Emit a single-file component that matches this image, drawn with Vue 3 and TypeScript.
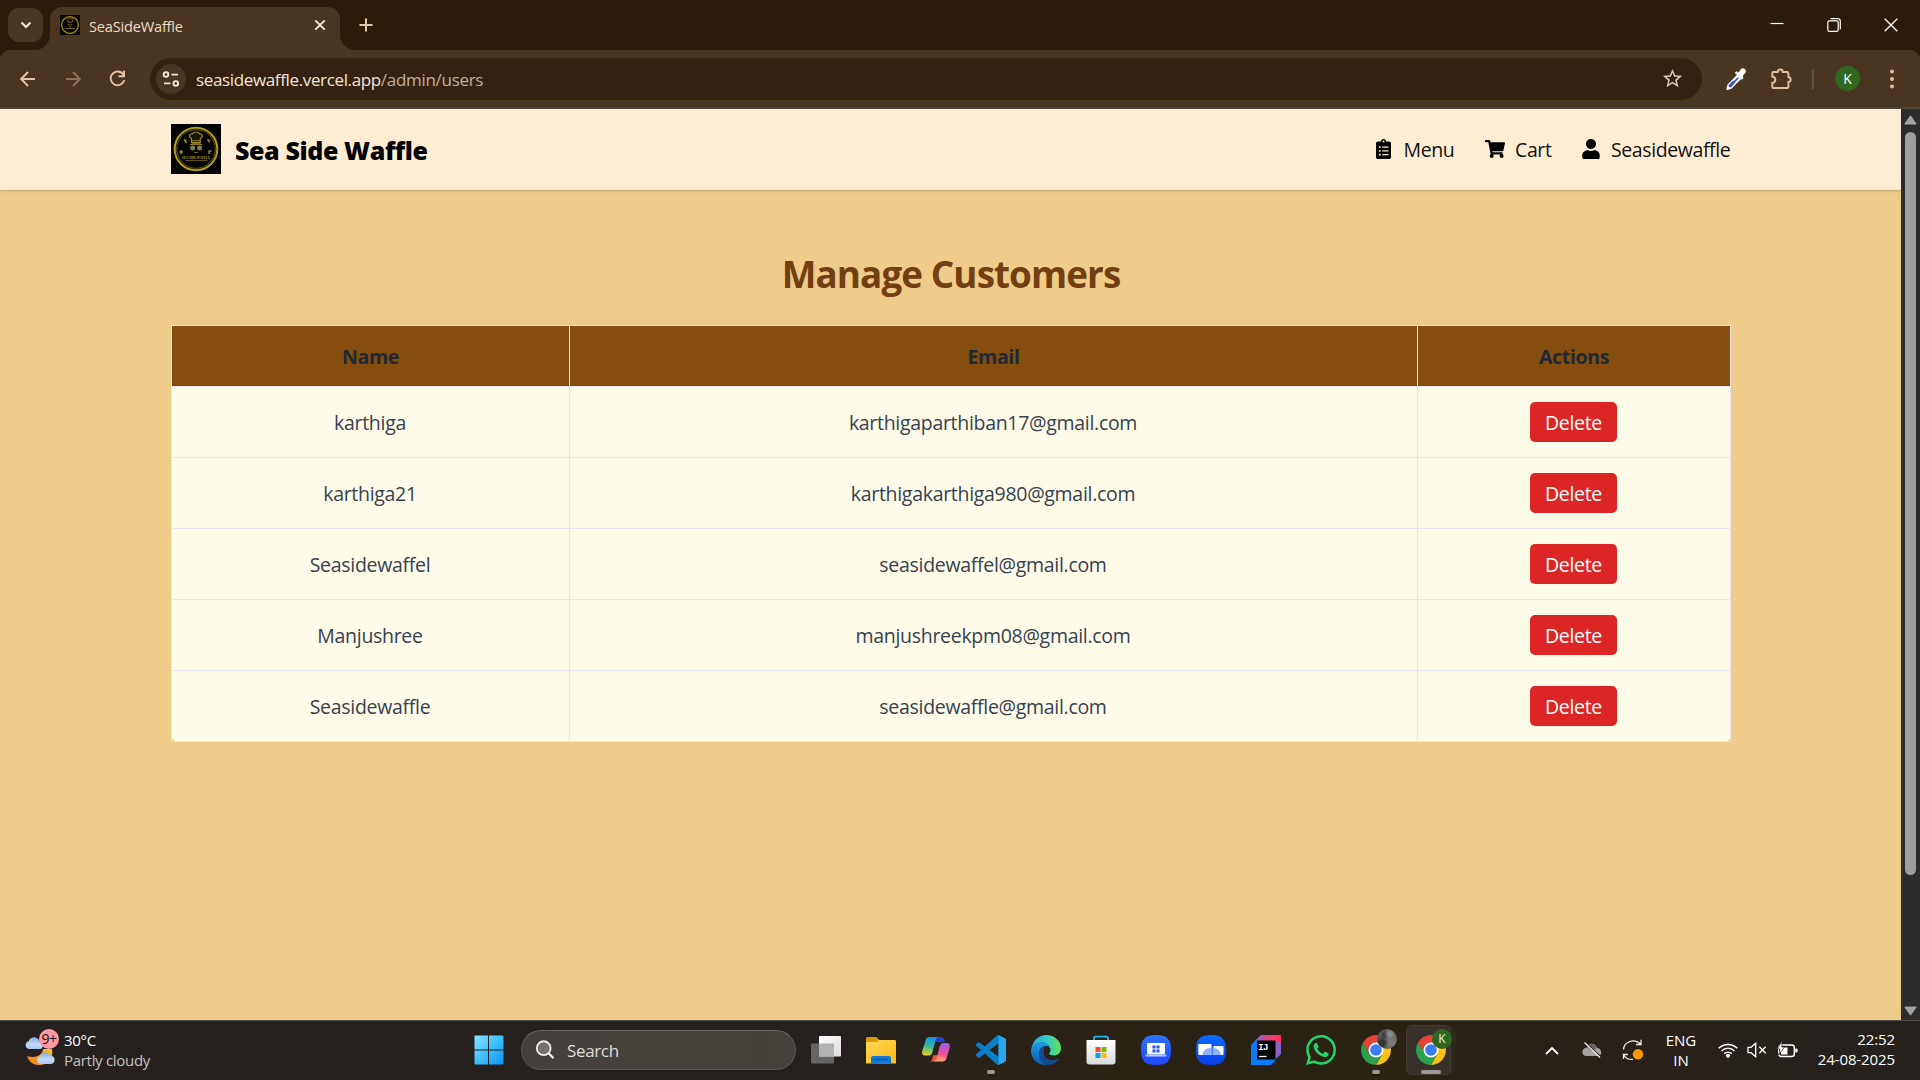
<script setup lang="ts">
interface Customer {
  name: string
  email: string
}

const customers: Customer[] = [
  { name: 'karthiga', email: 'karthigaparthiban17@gmail.com' },
  { name: 'karthiga21', email: 'karthigakarthiga980@gmail.com' },
  { name: 'Seasidewaffel', email: 'seasidewaffel@gmail.com' },
  { name: 'Manjushree', email: 'manjushreekpm08@gmail.com' },
  { name: 'Seasidewaffle', email: 'seasidewaffle@gmail.com' },
]
</script>

<template>
  <div class="desktop">
    <header class="tabstrip">
      <button class="tab-search" aria-label="Search tabs">
        <svg width="12" height="8" viewBox="0 0 12 8"><path d="M1.500 1.500 6 6l4.500-4.500" fill="none" stroke="#f3e3d3" stroke-width="2.200" /></svg>
      </button>
      <div class="tab">
        <svg class="favicon" width="20" height="20" viewBox="0 0 50 50">
          <rect width="50" height="50" fill="#050500" />
          <circle cx="25" cy="25" r="21" fill="none" stroke="#a08b18" stroke-width="3.400" />
          <path d="M20 18v-4c-4-4 1-8 3-5 2-3 6-2 6 0 5-1 5 4 2 5v4zM20 24h4m3 0h4M22 29h6M13 34h24" fill="none" stroke="#8b7a1e" stroke-width="2.200" />
        </svg>
        <span class="tab-title">SeaSideWaffle</span>
        <svg class="tab-close" width="12" height="12" viewBox="0 0 12 12"><path d="m1.300 1.300 9.400 9.400m0-9.400-9.400 9.400" stroke="#f7e7d9" stroke-width="1.900" /></svg>
      </div>
      <svg class="new-tab" width="14" height="14" viewBox="0 0 14 14"><path d="M7 .5v13M.5 7h13" stroke="#e9c6a6" stroke-width="2" /></svg>
      <div class="window-controls">
        <svg width="14" height="14" viewBox="0 0 14 14"><path d="M.5 5.500h13" stroke="#fff" stroke-width="1.200" /></svg>
        <svg width="14" height="14" viewBox="0 0 14 14" fill="none" stroke="#fff" stroke-width="1.200"><rect x=".8" y="2.800" width="10.400" height="10.500" rx="1.600" /><path d="M3.400.7h7.200a2.700 2.700 0 0 1 2.700 2.700v7.800" /></svg>
        <svg width="14" height="14" viewBox="0 0 14 14"><path d="m.7.7 12.600 12.600m0-12.600L.7 13.300" stroke="#fff" stroke-width="1.300" /></svg>
      </div>
    </header>

    <div class="toolbar">
      <svg class="nav-back" width="16" height="16" viewBox="0 0 16 16"><path d="M15 8H1.500M8 1 1.200 8 8 15" fill="none" stroke="#e7c3a3" stroke-width="1.900" /></svg>
      <svg class="nav-forward" width="16" height="16" viewBox="0 0 16 16"><path d="M1 8h13.500M8 1l6.800 7L8 15" fill="none" stroke="#8d7259" stroke-width="1.900" /></svg>
      <svg class="nav-reload" width="17" height="17" viewBox="0 0 17 17"><path d="M14.300 4.500A6.900 6.900 0 1 0 15.300 10M15 .8v5.500H9.500" fill="none" stroke="#e7c3a3" stroke-width="1.900" /></svg>
      <div class="omnibox">
        <span class="site-info">
          <svg width="18" height="16" viewBox="0 0 18 16" fill="none" stroke="#f6e3d2" stroke-width="1.900"><circle cx="4" cy="3.600" r="2.300" /><path d="M9.500 3.600h6.500M2 12.400h6.500" /><circle cx="13.800" cy="12.400" r="2.300" /></svg>
        </span>
        <span class="url"><span class="host">seasidewaffle.vercel.app</span><span class="path">/admin/users</span></span>
        <svg class="star" width="23" height="23" viewBox="0 0 24 24"><path fill="#dcc9b8" d="M22 9.240l-7.190-.62L12 2 9.190 8.630 2 9.240l5.460 4.730L5.820 21 12 17.270 18.180 21l-1.630-7.030L22 9.240zM12 15.400l-3.760 2.270 1-4.280-3.320-2.880 4.380-.38L12 6.100l1.710 4.040 4.380.38-3.320 2.880 1 4.280L12 15.400z" /></svg>
      </div>
      <svg class="eyedropper" width="22" height="24" viewBox="0 0 22 24">
        <path d="M12.800 8.500 3.300 18.200 2.300 22l3.700-1.200 9.300-9.600z" fill="#2f4fc8" stroke="#fff" stroke-width="2" stroke-linejoin="round" />
        <path d="m9.200 14.500-4.700 5" stroke="#2f4fc8" stroke-width="3" />
        <path d="m9.700 5.800 2-1.600 1.800 1.200 2.700-3.700c2-1.600 5.800 1.200 4.500 3.800l-3 3.500.8 2-1.700 1.700z" fill="#fff" />
      </svg>
      <svg class="extensions" width="22" height="22" viewBox="0 0 22 22"><path d="M3.600 4H7.700C8 .8 12.500.8 12.800 4h4.300q1.300 0 1.300 1.300V9c3 .4 3 4.700 0 5v4.700q0 1.300-1.300 1.300H3.600q-1.300 0-1.300-1.300V14.900c4-.5 4-5.800 0-6.300V5.300Q2.300 4 3.600 4Z" fill="none" stroke="#e3bd9c" stroke-width="2" /></svg>
      <span class="separator"></span>
      <span class="profile">K</span>
      <svg class="more" width="6" height="22" viewBox="0 0 6 22" fill="#e3bd9c"><circle cx="3" cy="3.500" r="2" /><circle cx="3" cy="11" r="2" /><circle cx="3" cy="18.500" r="2" /></svg>
    </div>

    <div class="viewport">
      <div class="page">
        <nav class="navbar">
          <div class="brand">
            <svg class="logo" width="50" height="50" viewBox="0 0 50 50">
              <rect width="50" height="50" fill="#030303" />
              <circle cx="25" cy="25" r="21.300" fill="none" stroke="#b39c18" stroke-width="2" />
              <circle cx="25" cy="25" r="19.300" fill="none" stroke="#7a6c14" stroke-width=".8" />
              <path d="M20.500 18.500v-4.200c-3.500-1-2-5 .8-4.300 1-2.600 6.400-2.600 7.200 0 3-.6 4 3.400.8 4.300v4.200z" fill="#151303" stroke="#a18d1e" stroke-width="1.100" />
              <path d="M20.500 16.700h9M20.500 19.300h9" stroke="#a18d1e" stroke-width=".9" />
              <circle cx="21.600" cy="24" r="2.500" fill="#817a55" /><circle cx="28.600" cy="24" r="2.500" fill="#817a55" />
              <path d="M19 20.500h12M23 28q2 1.400 4 0" stroke="#8d7c1c" stroke-width="1" fill="none" />
              <path d="m13 15.500 2.500 3.500m.3-3-2.500 1M10 26v4m-1.500-2H12" stroke="#a18d1e" stroke-width="1.300" />
              <path d="m36.500 15 2 3.800m.5-3-2.500 1M37.500 29l3-2.500M38 26v4" stroke="#8f804b" stroke-width="1.300" />
              <text x="25" y="34.600" text-anchor="middle" class="logo-text" textLength="28" lengthAdjust="spacingAndGlyphs">SEA SIDE WAFFLE</text>
              <path d="M14.500 36.500h22" stroke="#766818" stroke-width=".8" />
            </svg>
            <span class="brand-name">Sea Side Waffle</span>
          </div>
          <ul class="links">
            <li>
              <span class="link-icon"><svg width="15" height="20" viewBox="0 0 384 512"><path d="M336 64h-80c0-35.300-28.700-64-64-64s-64 28.700-64 64H48C21.500 64 0 85.500 0 112v352c0 26.500 21.500 48 48 48h288c26.500 0 48-21.500 48-48V112c0-26.500-21.500-48-48-48zM96 424c-13.300 0-24-10.700-24-24s10.700-24 24-24 24 10.700 24 24-10.700 24-24 24zm0-96c-13.300 0-24-10.700-24-24s10.700-24 24-24 24 10.700 24 24-10.700 24-24 24zm0-96c-13.300 0-24-10.700-24-24s10.700-24 24-24 24 10.700 24 24-10.700 24-24 24zm96-192c13.300 0 24 10.700 24 24s-10.700 24-24 24-24-10.700-24-24 10.700-24 24-24zm128 368c0 4.400-3.600 8-8 8H168c-4.400 0-8-3.600-8-8v-16c0-4.400 3.600-8 8-8h144c4.400 0 8 3.600 8 8v16zm0-96c0 4.400-3.600 8-8 8H168c-4.400 0-8-3.600-8-8v-16c0-4.400 3.600-8 8-8h144c4.400 0 8 3.600 8 8v16zm0-96c0 4.400-3.600 8-8 8H168c-4.400 0-8-3.600-8-8v-16c0-4.400 3.600-8 8-8h144c4.400 0 8 3.600 8 8v16z" /></svg></span>Menu
            </li>
            <li>
              <span class="link-icon cart"><svg width="20" height="18" viewBox="0 0 576 512"><path d="M528.120 301.319l47.273-208C578.806 78.301 567.391 64 551.990 64H159.208l-9.166-44.810C147.758 8.021 137.930 0 126.529 0H24C10.745 0 0 10.745 0 24v16c0 13.255 10.745 24 24 24h69.883l70.248 343.435C147.325 417.100 136 435.222 136 456c0 30.928 25.072 56 56 56s56-25.072 56-56c0-15.674-6.447-29.835-16.824-40h209.647C430.447 426.165 424 440.326 424 456c0 30.928 25.072 56 56 56s56-25.072 56-56c0-22.172-12.888-41.332-31.579-50.405l5.517-24.276c3.413-15.018-8.002-29.319-23.403-29.319H218.117l-6.545-32h293.145c11.206 0 20.920-7.754 23.403-18.681z" /></svg></span>Cart
            </li>
            <li>
              <span class="link-icon user"><svg width="18" height="20" viewBox="0 0 448 512"><path d="M224 256c70.700 0 128-57.300 128-128S294.700 0 224 0 96 57.300 96 128s57.300 128 128 128zm89.600 32h-16.700c-22.200 10.200-46.900 16-72.900 16s-50.600-5.800-72.900-16h-16.700C60.200 288 0 348.200 0 422.400V464c0 26.500 21.500 48 48 48h352c26.500 0 48-21.500 48-48v-41.600c0-74.200-60.200-134.400-134.400-134.400z" /></svg></span>Seasidewaffle
            </li>
          </ul>
        </nav>

        <main class="content">
          <h1>Manage Customers</h1>
          <div class="table-wrap">
            <table>
              <colgroup><col class="col-name" /><col class="col-email" /><col class="col-actions" /></colgroup>
              <thead>
                <tr><th>Name</th><th>Email</th><th>Actions</th></tr>
              </thead>
              <tbody>
                <tr v-for="customer in customers" :key="customer.email">
                  <td>{{ customer.name }}</td>
                  <td>{{ customer.email }}</td>
                  <td><button class="delete">Delete</button></td>
                </tr>
              </tbody>
            </table>
          </div>
        </main>
      </div>
      <div class="scrollbar">
        <svg width="13" height="10" viewBox="0 0 13 10"><path d="M6.500.8 12.200 9H.8z" fill="#a3a3a3" stroke="#a3a3a3" stroke-linejoin="round" /></svg>
        <span class="thumb"></span>
        <svg width="13" height="10" viewBox="0 0 13 10"><path d="M6.500 9.200 12.200 1H.8z" fill="#a3a3a3" stroke="#a3a3a3" stroke-linejoin="round" /></svg>
      </div>
    </div>

    <footer class="taskbar">
      <div class="weather">
        <span class="weather-icon">
          <svg width="34" height="38" viewBox="0 0 34 38">
            <defs>
              <linearGradient id="moon" x1="1" y1="0" x2="0" y2="1"><stop offset="0" stop-color="#f9c21f" /><stop offset="1" stop-color="#f07c1e" /></linearGradient>
              <linearGradient id="cloud" x1="0" y1="0" x2="0" y2="1"><stop offset="0" stop-color="#7ea8e8" /><stop offset=".6" stop-color="#c4daf7" /><stop offset="1" stop-color="#a9c6f1" /></linearGradient>
            </defs>
            <path d="M27 18c2 10-5 16-13 16-6 0-10-3-12-9 8 3 16-1 16-7z" fill="url(#moon)" />
            <path d="M4 18a4 4 0 0 1-.3-7.800C5 5.500 12 4.500 14.500 10 19 10.500 19 18 15 18z" fill="url(#cloud)" />
            <path d="M15.500 33a4 4 0 0 1-.3-7.800c1.300-5 8-5.500 10.300-.7 5.500.5 5.500 8.500 0 8.500z" fill="url(#cloud)" />
          </svg>
          <span class="count">9+</span>
        </span>
        <span class="weather-text"><b>30°C</b><span>Partly cloudy</span></span>
      </div>

      <div class="apps">
        <svg class="start" width="30" height="30" viewBox="0 0 30 30">
          <defs><linearGradient id="win" x1="0" y1="0" x2="1" y2="1"><stop offset="0" stop-color="#8ae2fe" /><stop offset=".5" stop-color="#3fc0fc" /><stop offset="1" stop-color="#0a94f8" /></linearGradient></defs>
          <path d="M1.500.5H14v14H.5v-13a1 1 0 0 1 1-1zM15 .5h13.500a1 1 0 0 1 1 1v13H15zM.5 15.500H14v14H1.500a1 1 0 0 1-1-1zM15 15.500h14.500v13a1 1 0 0 1-1 1H15z" fill="url(#win)" />
        </svg>
        <div class="search">
          <svg width="20" height="20" viewBox="0 0 20 20"><circle cx="8.700" cy="8.200" r="6.900" fill="#74716d" stroke="#e8eef2" stroke-width="1.900" /><path d="m13.700 13.300 4.800 4.900" stroke="#e8eef2" stroke-width="2.200" /></svg>
          <span>Search</span>
        </div>

        <span class="app">
          <svg width="30" height="30" viewBox="0 0 30 30">
            <defs><linearGradient id="tvA" x1="0" y1="0" x2="1" y2="1"><stop offset="0" stop-color="#fff" /><stop offset="1" stop-color="#dcdcdc" /></linearGradient></defs>
            <rect y="8.500" width="23" height="20" rx="1" fill="#656565" /><rect x="8" y="1" width="22" height="20.500" rx="1" fill="url(#tvA)" /><path d="M8 8.500h15v13H8z" fill="#b3b3b3" />
          </svg>
        </span>
        <span class="app">
          <svg width="30" height="30" viewBox="0 0 30 30">
            <defs><linearGradient id="folder" x1="0" y1="0" x2="1" y2="1"><stop offset="0" stop-color="#ffd85a" /><stop offset="1" stop-color="#fdb913" /></linearGradient></defs>
            <path d="M0 3.500Q0 2 1.500 2h8q1 0 1.700.8L13.500 5H28q2 0 2 2v5H0z" fill="#dd9a05" />
            <path d="M0 7h11l2-2h15.500Q30 5 30 6.500v22H0z" fill="url(#folder)" />
            <path d="M5 28.500V23q0-2 2-2h16q2 0 2 2v5.500z" fill="#0f78d4" /><path d="M8 24.500h14" stroke="#094f94" stroke-width="1.300" />
          </svg>
        </span>
        <span class="app">
          <svg width="30" height="30" viewBox="0 0 30 30">
            <defs>
              <linearGradient id="copA" x1=".5" y1="0" x2=".3" y2="1"><stop offset="0" stop-color="#1595e8" /><stop offset=".5" stop-color="#35b7a0" /><stop offset="1" stop-color="#f1d312" /></linearGradient>
              <linearGradient id="copB" x1=".6" y1="0" x2=".4" y2="1"><stop offset="0" stop-color="#a157ec" /><stop offset=".6" stop-color="#ee5290" /><stop offset="1" stop-color="#ffb070" /></linearGradient>
            </defs>
            <path d="M13 2h7.500q2 0 2.600 2l.9 3.200h-6.500L14 6z" fill="#2145c9" />
            <path d="M8.500 26.500q2 0 2.700-2.300l1-4h5l-1.200 6z" fill="#f0573c" />
            <path d="M8.700 2H18c-2.500 0-3 1.500-3.500 3.500l-3 11.500c-.7 2.500-2 3.500-4 3.500H4C1.500 20.500.7 18.500 1.300 16L4.500 5.500C5.200 3.200 6.200 2 8.700 2z" fill="url(#copA)" />
            <path d="M21.500 26.500h-9.800c2.500 0 3.500-1.500 4-3.500l3-11.500c.7-2.500 2-3.500 4-3.500H26c2.500 0 3.300 2 2.700 4.500L25.700 23c-.7 2.300-1.700 3.500-4.200 3.500z" fill="url(#copB)" />
          </svg>
        </span>
        <span class="app running">
          <svg width="30" height="30" viewBox="0 0 24 24">
            <path fill="#0a7fc8" d="M23.150 2.587L18.210.21a1.494 1.494 0 0 0-1.705.29l-9.460 8.630-4.120-3.128a.999.999 0 0 0-1.276.057L.327 7.261A1 1 0 0 0 .326 8.740L3.899 12 .326 15.260a1 1 0 0 0 .001 1.479L1.650 17.940a.999.999 0 0 0 1.276.057l4.120-3.128 9.460 8.630a1.492 1.492 0 0 0 1.704.29l4.942-2.377A1.500 1.500 0 0 0 24 20.060V3.939a1.500 1.500 0 0 0-.85-1.352zm-5.146 14.861L10.826 12l7.178-5.448v10.896z" />
            <path fill="#2ba5ee" d="M18.004.1 23.150 2.587A1.500 1.500 0 0 1 24 3.939V20.060a1.500 1.500 0 0 1-.85 1.352l-5.146 2.480z" />
          </svg>
        </span>
        <span class="app">
          <svg width="30" height="30" viewBox="0 0 30 30">
            <defs>
              <linearGradient id="edgeA"><stop offset="0" stop-color="#2aa9e0" /><stop offset=".5" stop-color="#35c7c9" /><stop offset="1" stop-color="#63e251" /></linearGradient>
              <linearGradient id="edgeB" x1="0" y1="0" x2="0" y2="1"><stop offset="0" stop-color="#1b9de2" /><stop offset="1" stop-color="#0a5bb5" /></linearGradient>
            </defs>
            <path d="M.5 14C1.500 5.500 8 0 15.200 0 23.500 0 30 6 30 13.200c0 4.600-3.400 7.300-7.200 7.300-3.400 0-5-1.400-4.600-2.300.8-1 1.300-2 1.300-3.300C19.500 10.500 15 7.500 10.800 7.500 5.500 7.500 1.800 10 .5 14z" fill="url(#edgeA)" />
            <path d="M.1 15C.5 10 5.500 7 10.500 7c5 0 9.200 3.500 9 7.900-.2-2-2-3.800-4.800-3.800-4 0-6.500 3.500-6.500 7.800 0 5 3.500 9.800 9 10.800-1 .3-1.600.3-2.300.3C6 30-.4 23 .1 15z" fill="url(#edgeB)" />
            <path d="M14 11.200c-4 1.300-6 4.300-6 8.300 0 5.500 4.500 10.300 10 10.300 4 0 7.700-2.300 10-5.300.4-.6 0-1.200-.8-.8-2 1-4 1.300-5.800 1.300-4.800 0-8.700-3-8.700-7 0-3 .5-5 1.300-6.800z" fill="#124c8f" />
          </svg>
        </span>
        <span class="app">
          <svg width="30" height="30" viewBox="0 0 30 30">
            <defs><linearGradient id="bag" x1="0" y1="0" x2="0" y2="1"><stop offset="0" stop-color="#fff" /><stop offset="1" stop-color="#d9dadb" /></linearGradient></defs>
            <path d="M8 6V3q0-1.300 1.300-1.300h11.400Q22 1.700 22 3v3" fill="none" stroke="#26b4ea" stroke-width="1.800" />
            <path d="M.5 5h29v21.500q0 3-3 3h-23q-3 0-3-3z" fill="url(#bag)" />
            <path d="M9.500 12h5v5h-5z" fill="#f25022" /><path d="M15.500 12h5v5h-5z" fill="#7fba00" /><path d="M9.500 18h5v5h-5z" fill="#00a4ef" /><path d="M15.500 18h5v5h-5z" fill="#ffb900" />
          </svg>
        </span>
        <span class="app">
          <svg width="30" height="30" viewBox="0 0 30 30">
            <defs><linearGradient id="pc" x1="0" y1="0" x2="0" y2="1"><stop offset="0" stop-color="#2d74ff" /><stop offset="1" stop-color="#2145ff" /></linearGradient></defs>
            <path d="M15 0c11 0 15 4 15 15s-4 15-15 15S0 26 0 15 4 0 15 0z" fill="url(#pc)" />
            <rect x="6" y="8" width="18" height="11.500" rx="1" fill="#fff" /><path d="M4 19.800h22l-1 1.700H5z" fill="#b9cbff" />
            <path d="M11.500 10.500h3v3h-3zM15.500 10.500h3v3h-3zM11.500 14.500h3v3h-3zM15.500 14.500h3v3h-3z" fill="#2a4ff0" />
          </svg>
        </span>
        <span class="app">
          <svg width="30" height="30" viewBox="0 0 30 30">
            <defs><linearGradient id="link" x1="0" y1="0" x2="0" y2="1"><stop offset="0" stop-color="#0a6bff" /><stop offset="1" stop-color="#0a3de6" /></linearGradient></defs>
            <path d="M15 0c11 0 15 4 15 15s-4 15-15 15S0 26 0 15 4 0 15 0z" fill="url(#link)" />
            <path d="M2.300 10q0-1 1-1h11.200q1 0 1 1v10H3.300q-1 0-1-1z" fill="#fff" /><path d="M17.300 12q0-1 1-1h8.200q1 0 1 1v7q0 1-1 1h-9.200z" fill="#fff" />
            <path d="M6.500 20A9 7.300 0 0 1 15.500 12.700V20zM17.300 20v-7.200A9 7.300 0 0 1 25 20z" fill="#8db4f6" /><path d="M15.500 12.700h1.800V20h-1.800z" fill="#4a86f2" />
          </svg>
        </span>
        <span class="app">
          <svg width="30" height="30" viewBox="0 0 30 30">
            <defs><linearGradient id="ij" x1="0" y1="0" x2="1" y2="0"><stop offset="0" stop-color="#5b6be8" /><stop offset=".35" stop-color="#c94a8d" /><stop offset=".7" stop-color="#fb3a66" /><stop offset="1" stop-color="#ff2d5c" /></linearGradient></defs>
            <path d="M10 0h20v19L18.500 30H0V10z" fill="#087cfa" /><path d="M10 0h20v10L15 18 4 6z" fill="url(#ij)" /><path d="M22 5.500 30 8v11l-8 7z" fill="#8a63c9" /><path d="M20 30H0V10l6-5v20h18.500z" fill="#087cfa" />
            <rect x="6" y="5.500" width="18.500" height="19" fill="#000" />
            <text x="7.300" y="14.800" class="ij-text">IJ</text><path d="M8 21.500h7.500" stroke="#fff" stroke-width="1.300" />
          </svg>
        </span>
        <span class="app">
          <svg width="30" height="30" viewBox="0 0 24 24"><path fill="#25d366" d="M17.472 14.382c-.297-.149-1.758-.867-2.030-.967-.273-.099-.471-.148-.67.15-.197.297-.767.966-.94 1.164-.173.199-.347.223-.644.075-.297-.15-1.255-.463-2.390-1.475-.883-.788-1.480-1.761-1.653-2.059-.173-.297-.018-.458.13-.606.134-.133.298-.347.446-.52.149-.174.198-.298.298-.497.099-.198.05-.371-.025-.52-.075-.149-.669-1.612-.916-2.207-.242-.579-.487-.5-.669-.51-.173-.008-.371-.01-.57-.01-.198 0-.52.074-.792.372-.272.297-1.040 1.016-1.040 2.479 0 1.462 1.065 2.875 1.213 3.074.149.198 2.096 3.200 5.077 4.487.709.306 1.262.489 1.694.625.712.227 1.360.195 1.871.118.571-.085 1.758-.719 2.006-1.413.248-.694.248-1.289.173-1.413-.074-.124-.272-.198-.57-.347m-5.421 7.403h-.004a9.870 9.870 0 01-5.031-1.378l-.361-.214-3.741.982.998-3.648-.235-.374a9.860 9.860 0 01-1.510-5.260c.001-5.450 4.436-9.884 9.888-9.884 2.640 0 5.122 1.030 6.988 2.898a9.825 9.825 0 012.893 6.994c-.003 5.450-4.437 9.884-9.885 9.884m8.413-18.297A11.815 11.815 0 0012.050 0C5.495 0 .16 5.335.157 11.892c0 2.096.547 4.142 1.588 5.945L.057 24l6.305-1.654a11.882 11.882 0 005.683 1.448h.005c6.554 0 11.890-5.335 11.893-11.893a11.821 11.821 0 00-3.480-8.413z" /></svg>
        </span>
        <span v-for="profile in ['moon', 'k']" :key="profile" class="app running" :class="{ active: profile === 'k' }">
          <svg width="30" height="30" viewBox="-15 -15 30 30">
            <path d="M-12.990-7.500A15 15 0 0 1 12.990-7.500H0L-6.500 3.750z" fill="#ea4335" />
            <path d="M12.990-7.500A15 15 0 0 1 0 15L6.500 3.750 0-7.500z" fill="#fbc116" />
            <path d="M0 15A15 15 0 0 1-12.990-7.500L-6.500 3.750H6.500z" fill="#2da04c" />
            <circle r="7.500" fill="#fff" /><circle r="5.800" fill="#3b7df0" />
          </svg>
          <span class="app-badge" :class="profile">{{ profile === 'k' ? 'K' : '' }}</span>
        </span>
      </div>

      <div class="tray">
        <svg class="tray-chevron" width="14" height="9" viewBox="0 0 14 9"><path d="M1 8l6-6 6 6" fill="none" stroke="#fff" stroke-width="1.900" /></svg>
        <svg class="tray-cloud" width="22" height="18" viewBox="0 0 22 18">
          <path d="M6 6.500C7 2 14 1 16 7c5 0 6 8 1 8H5.500C0 15 0 7 6 6.500z" fill="#a5a19e" /><path d="M6 6.500C7 2 14 1 16 7l-5 3z" fill="#6d6966" />
          <path d="m4.300 .9 15.500 15" stroke="#2a221b" stroke-width="1.400" /><path d="m3.500 1.500 15.500 15" stroke="#eee" stroke-width="1.300" />
        </svg>
        <svg class="tray-sync" width="22" height="22" viewBox="0 0 22 22"><path d="M1.500 10.500C2 3 12-1.500 18.700 5M19 .8V5.500h-5M1.500 20v-4.500h4.300M2 16.500c2 3 5 4.300 9 3.800" fill="none" stroke="#eee" stroke-width="1.300" /><circle cx="16" cy="15.200" r="5.200" fill="#ff9800" /></svg>
        <span class="language"><span>ENG</span><span>IN</span></span>
        <svg class="tray-wifi" width="20" height="16" viewBox="0 0 20 16" fill="none" stroke="#fff" stroke-width="1.500"><path d="M.8 6.200a13 13 0 0 1 18.400 0M3.500 9a9.300 9.300 0 0 1 13 0M6.200 11.700a5.400 5.400 0 0 1 7.600 0" /><circle cx="10" cy="13.800" r="1.300" fill="#fff" /></svg>
        <svg class="tray-sound" width="20" height="16" viewBox="0 0 20 16" fill="none" stroke="#fff" stroke-width="1.300"><path d="M1 5.300h3l4.700-4v13.400l-4.700-4H1z" /><path d="m12.300 4.800 6.400 6.400m0-6.400-6.400 6.400" /></svg>
        <svg class="tray-battery" width="21" height="18" viewBox="0 0 21 18"><rect x="1.700" y="4" width="15.600" height="11.500" rx="2.500" fill="none" stroke="#fff" stroke-width="1.400" /><path d="M4 6.500h6.500v7H4z" fill="#fff" /><path d="M18.300 7.500h1.200q1 0 1 1v2q0 1-1 1h-1.200z" fill="#fff" /><path d="M5 0 .3 8h2.700l-1.500 6L7.500 6H4.800z" fill="#fff" stroke="#28211b" stroke-width=".7" /></svg>
        <span class="clock"><span>22:52</span><span>24-08-2025</span></span>
      </div>
    </footer>
  </div>
</template>

<style>
body {
  margin: 0;
  overflow: hidden;
}
</style>

<style scoped>
* {
  box-sizing: border-box;
}
.desktop {
  display: flex;
  flex-direction: column;
  width: 1920px;
  height: 1080px;
  font-family: "Open Sans", "Noto Sans", sans-serif;
  background: #4a3620;
}
svg {
  display: block;
  flex: none;
}
button {
  border: 0;
  padding: 0;
  font: inherit;
  letter-spacing: inherit;
}

/* Browser chrome */
.tabstrip {
  display: flex;
  align-items: flex-start;
  flex: none;
  height: 50px;
  padding-left: 8px;
  background: #2c1b09;
}
.tab-search {
  display: grid;
  place-items: center;
  width: 35px;
  height: 34px;
  margin-top: 8px;
  border-radius: 11px;
  background: #4a3620;
}
.tab {
  position: relative;
  display: flex;
  align-items: center;
  width: 290px;
  height: 43px;
  margin: 7px 0 0 7px;
  padding: 0 14px 7px 10px;
  border-radius: 12px 12px 0 0;
  background: #4a3620;
}
.tab::before,
.tab::after {
  content: "";
  position: absolute;
  bottom: 0;
  width: 15px;
  height: 15px;
}
.tab::before {
  right: 100%;
  background: radial-gradient(circle at 0 0, transparent 14.500px, #4a3620 15.500px);
}
.tab::after {
  left: 100%;
  background: radial-gradient(circle at 100% 0, transparent 14.500px, #4a3620 15.500px);
}
.tab-title {
  flex: 1;
  margin-left: 9px;
  padding-top: 1px;
  font-size: 14.600px;
  letter-spacing: -0.200px;
  color: #efdccb;
}
.new-tab {
  margin: 18px 0 0 19px;
}
.window-controls {
  display: flex;
  gap: 43px;
  margin: 18px 22px 0 auto;
}
.toolbar {
  display: flex;
  align-items: center;
  flex: none;
  height: 59px;
  padding: 0 25px 0 20px;
  border-bottom: 2px solid #50453b;
  background: radial-gradient(circle at 10px 10px, #4a3620 9.500px, #2c1b09 10.500px) 0 0 / 10px 10px no-repeat, radial-gradient(circle at 0 10px, #4a3620 9.500px, #2c1b09 10.500px) 100% 0 / 10px 10px no-repeat, #4a3620;
}
.nav-forward {
  margin-left: 29px;
}
.nav-reload {
  margin-left: 28px;
}
.omnibox {
  display: flex;
  align-items: center;
  width: 1552px;
  height: 42px;
  margin-left: 24px;
  padding: 0 18px 0 6px;
  border-radius: 21px;
  background: #342110;
}
.site-info {
  display: grid;
  place-items: center;
  width: 30px;
  height: 30px;
  border-radius: 50%;
  background: #4a3620;
}
.url {
  flex: 1;
  padding: 1px 0 0 10px;
  font-size: 17px;
}
.host {
  letter-spacing: -0.360px;
  color: #f7e5d6;
}
.path {
  letter-spacing: -0.300px;
  color: #c2ae9d;
}
.eyedropper {
  margin-left: 23px;
}
.extensions {
  margin: 0 0 0 23px;
}
.separator {
  width: 2px;
  height: 20px;
  margin-left: 20px;
  background: #67503a;
}
.profile {
  display: grid;
  place-items: center;
  width: 25px;
  height: 25px;
  margin-left: 21px;
  border-radius: 50%;
  background: #2f671e;
  font-size: 14px;
  line-height: 25px;
  color: #fff;
}
.more {
  margin-left: auto;
}

/* Page */
.viewport {
  display: flex;
  flex: none;
  height: 911px;
}
.page {
  flex: 1;
  background: #efcc89;
}
.navbar {
  position: relative;
  display: flex;
  align-items: center;
  justify-content: space-between;
  height: 81px;
  padding: 0 170px 0 171px;
  border-bottom: 1px solid #e5e7eb;
  background: #ffedd3;
  box-shadow: 0 1px 3px rgba(0, 0, 0, 0.120), 0 1px 2px rgba(0, 0, 0, 0.080);
}
.brand {
  display: flex;
  align-items: center;
}
.logo-text {
  font-family: "Liberation Serif", serif;
  font-size: 4.200px;
  font-weight: 700;
  fill: #b39e24;
}
.brand-name {
  margin-left: 14px;
  padding-top: 2px;
  font-size: 25px;
  font-weight: 800;
  letter-spacing: -0.380px;
  color: #000;
}
.links {
  display: grid;
  grid-template-columns: 109px 97px 149px;
  margin: 0;
  padding: 0;
  list-style: none;
  font-size: 19.500px;
  letter-spacing: -0.400px;
  color: #111;
  white-space: nowrap;
}
.links li {
  display: flex;
  align-items: center;
}
.link-icon {
  width: 27.500px;
}
.link-icon.cart {
  width: 30px;
}
.link-icon.user {
  width: 29px;
}
.content {
  padding: 57px 170px 0 171px;
}
h1 {
  margin: 0;
  font-size: 36.800px;
  font-weight: 700;
  line-height: 54px;
  letter-spacing: -0.900px;
  text-align: center;
  color: #713f12;
}
.table-wrap {
  margin-top: 24px;
}
table {
  width: 1560px;
  table-layout: fixed;
  border-collapse: collapse;
  font-size: 19.500px;
  letter-spacing: -0.300px;
  text-align: center;
}
.col-name {
  width: 398px;
}
.col-email {
  width: 848px;
}
th,
td {
  padding: 0;
  border: 1px solid #e5e7eb;
}
th {
  height: 61px;
  font-size: 19.600px;
  letter-spacing: -0.400px;
  color: #1f2937;
  background: #854d0e;
}
td {
  height: 71px;
  padding-right: 1px;
  color: #374151;
  background: #fefce8;
}
tbody tr:last-child td:first-child {
  background: radial-gradient(circle at 5px 0, #fefce8 5px, #efcc89 5.500px) 0 100% / 5px 5px no-repeat, linear-gradient(#fefce8, #fefce8) 0 0 / 100% calc(100% - 5px) no-repeat, linear-gradient(#fefce8, #fefce8) 5px 0 / 100% 100% no-repeat;
}
tbody tr:last-child td:last-child {
  background: radial-gradient(circle at 0 0, #fefce8 5px, #efcc89 5.500px) 100% 100% / 5px 5px no-repeat, #fefce8;
}
.delete {
  display: block;
  width: 87px;
  height: 40px;
  margin: 0 auto;
  border-radius: 5px;
  background: #dc2626;
  color: #fff;
}
.scrollbar {
  display: flex;
  flex-direction: column;
  align-items: center;
  width: 19px;
  padding: 6px 0 4px;
  background: #2c2c2c;
}
.thumb {
  width: 11px;
  height: 743px;
  margin: 7px 0 auto;
  border-radius: 6px;
  background: #9f9f9f;
}

/* Taskbar */
.taskbar {
  display: flex;
  align-items: center;
  flex: none;
  height: 60px;
  padding-bottom: 1px;
  border-top: 1px solid #504b46;
  background: linear-gradient(90deg, #26211e 0, #26211e 44%, #2a2217 52%, #2a2213 72%, #29211a 86%, #25211e 100%);
  color: #fff;
}
.weather {
  display: flex;
  width: 474px;
  padding-left: 25px;
}
.weather-icon {
  position: relative;
  width: 39px;
  margin-top: 0;
}
.count {
  position: absolute;
  top: -2px;
  left: 14px;
  width: 20px;
  height: 20px;
  border-radius: 50%;
  background: #ff99a4;
  font-size: 14px;
  line-height: 20px;
  letter-spacing: -0.500px;
  text-align: center;
  color: #1b1111;
}
.weather-text,
.language,
.clock {
  display: flex;
  flex-direction: column;
  font-size: 15px;
  line-height: 20px;
}
.weather-text {
  margin-top: -1px;
  letter-spacing: -0.300px;
}
.weather-text b {
  font-weight: 400;
}
.weather-text span {
  color: #c4c1bf;
}
.apps {
  display: flex;
  align-items: center;
}
.start {
  width: 30px;
}
.search {
  display: flex;
  align-items: center;
  width: 275px;
  height: 40px;
  margin: 0 15px 0 17px;
  padding-left: 13px;
  border: 1px solid #5a5551;
  border-top-color: #6a6561;
  border-radius: 20px;
  background: linear-gradient(90deg, #443f3c, #45423b 50%, #47403c);
  font-size: 17px;
  letter-spacing: -0.350px;
  color: #dedbd8;
}
.search span {
  margin-left: 12px;
}
.app {
  position: relative;
  display: grid;
  place-items: center;
  width: 30px;
  height: 50px;
  margin-right: 25px;
}
.app.running::after {
  content: "";
  position: absolute;
  bottom: 1px;
  left: 11px;
  width: 8px;
  height: 4px;
  border-radius: 2px;
  background: #9c9893;
}
.app.active::before {
  content: "";
  position: absolute;
  inset: 0 -5px 0 -10px;
  border: 1px solid #443c31;
  border-radius: 6px;
  background: #38302a;
  box-shadow: 5px 0 0 -0.500px #30281e;
}
.app.active svg {
  position: relative;
}
.app.active::after {
  left: 5px;
  width: 20px;
}
.app-badge {
  position: absolute;
  top: 4px;
  right: -6px;
  width: 20px;
  height: 20px;
  border-radius: 50%;
  font-size: 12px;
  line-height: 20px;
  text-align: center;
}
.app-badge.moon {
  background: radial-gradient(circle at 65% 25%, #8a8a8a 0 8%, transparent 30%), radial-gradient(circle at 25% 70%, #333 0 12%, transparent 30%), radial-gradient(circle at 40% 30%, #3a3a3a 0 8%, transparent 24%), radial-gradient(circle at 75% 70%, #7a7a7a 0 12%, #585858 50%);
}
.app-badge.k {
  background: #2f671e;
  color: #e9f0e6;
}
.ij-text {
  font-family: "Liberation Mono", monospace;
  font-size: 9px;
  font-weight: 700;
  letter-spacing: -0.600px;
  fill: #fff;
}
.tray {
  display: flex;
  align-items: center;
  margin-left: auto;
  padding-right: 25px;
}
.tray-cloud {
  margin-left: 22px;
}
.tray-sync {
  margin-left: 19px;
}
.language {
  width: 30px;
  margin: 0 0 0 22px;
  align-items: center;
}
.tray-wifi {
  margin-left: 22px;
}
.tray-sound {
  margin-left: 9px;
}
.tray-battery {
  margin-left: 10px;
}
.clock {
  width: 78px;
  margin: -2px 0 0 19px;
  align-items: flex-end;
  letter-spacing: -0.100px;
}
</style>
